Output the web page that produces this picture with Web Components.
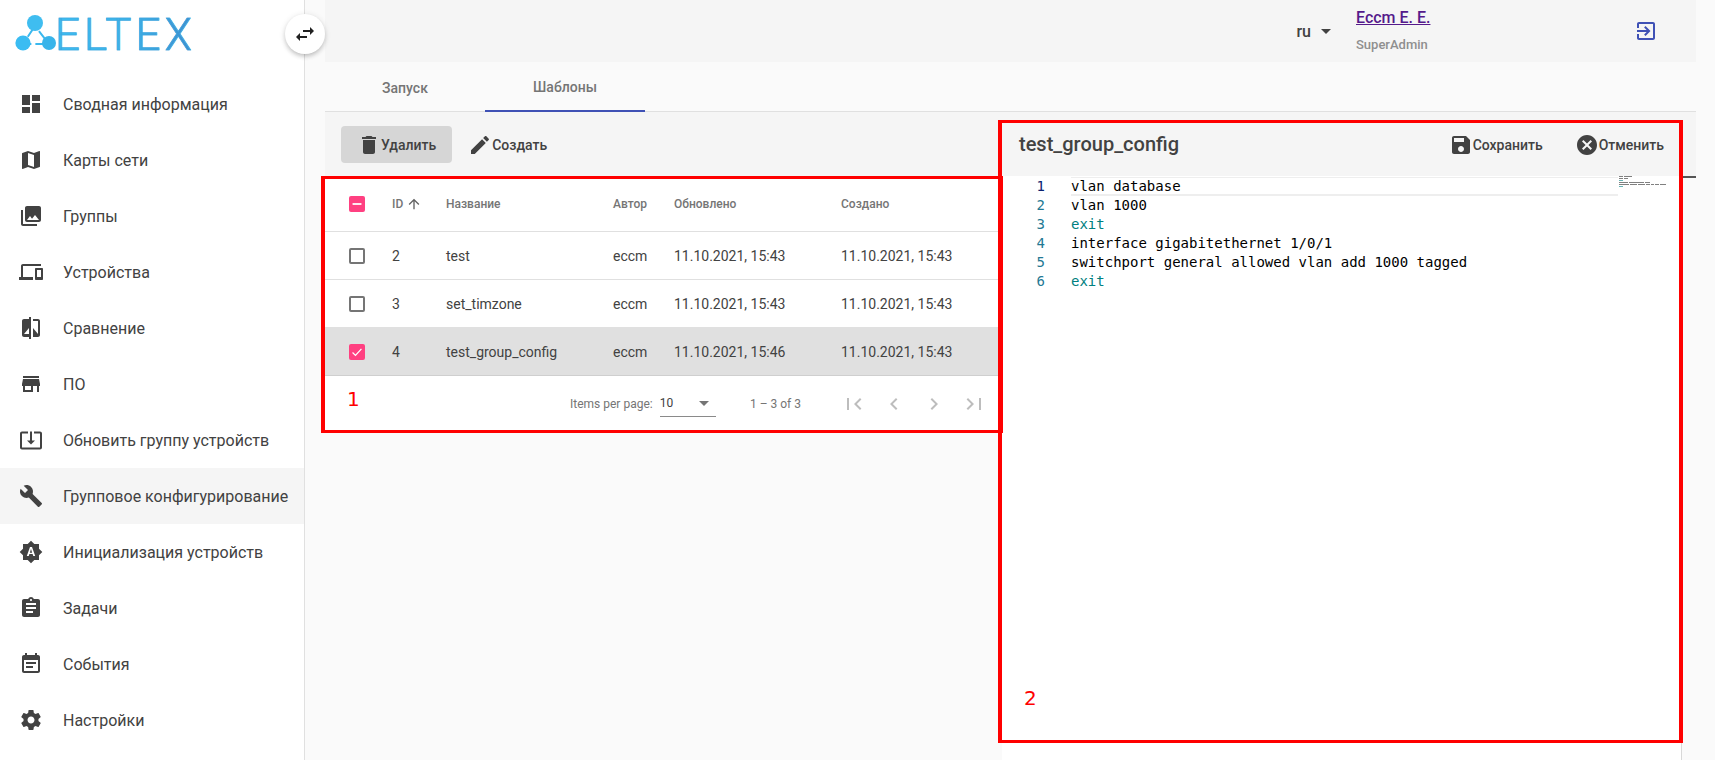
<!DOCTYPE html>
<html lang="ru">
<head>
<meta charset="utf-8">
<title>ELTEX</title>
<style>
  html, body { margin: 0; height: 100%; overflow: hidden; background: #fafafa; font-family: Roboto, "Liberation Sans", sans-serif; }
</style>
</head>
<body>
<eltex-app></eltex-app>
<script>
// material icon paths, viewBox 24x24
const ICONS = {
  dashboard: "M3 13h8V3H3v10zm0 8h8v-6H3v6zm10 0h8V11h-8v10zm0-18v6h8V3h-8z",
  map: "M20.5 3l-.16.03L15 5.1 9 3 3.36 4.9c-.21.07-.36.25-.36.48V20.5c0 .28.22.5.5.5l.16-.03L9 18.9l6 2.1 5.64-1.9c.21-.07.36-.25.36-.48V3.5c0-.28-.22-.5-.5-.5zM15 19l-6-2.11V5l6 2.11V19z",
  photos: "M22 16V4c0-1.1-.9-2-2-2H8c-1.1 0-2 .9-2 2v12c0 1.1.9 2 2 2h12c1.1 0 2-.9 2-2zm-11-4l2.03 2.71L16 11l4 5H8l3-4zM2 6v14c0 1.1.9 2 2 2h14v-2H4V6H2z",
  devices: "M4 6h18V4H4c-1.1 0-2 .9-2 2v11H0v3h14v-3H4V6zm19 2h-6c-.55 0-1 .45-1 1v10c0 .55.45 1 1 1h6c.55 0 1-.45 1-1V9c0-.55-.45-1-1-1zm-1 9h-4v-7h4v7z",
  compare: "M10 3H5c-1.1 0-2 .9-2 2v14c0 1.1.9 2 2 2h5v2h2V1h-2v2zm0 15H5l5-6v6zm9-15h-5v2h5v13l-5-6v9h5c1.1 0 2-.9 2-2V5c0-1.1-.9-2-2-2z",
  store: "M20 4H4v2h16V4zm1 10v-2l-1-5H4l-1 5v2h1v6h10v-6h4v6h2v-6h1zm-9 4H6v-4h6v4z",
  update: "M12 16.5l4-4h-3v-9h-2v9H8l4 4zm9-13h-6v1.99h6v14.03H3V5.49h6V3.5H3c-1.1 0-2 .9-2 2v14c0 1.1.9 2 2 2h18c1.1 0 2-.9 2-2v-14c0-1.1-.9-2-2-2z",
  build: "M22.7 19l-9.1-9.1c.9-2.3.4-5-1.5-6.9-2-2-5-2.4-7.4-1.3L9 6 6 9 1.6 4.7C.4 7.1.9 10.1 2.9 12.1c1.9 1.9 4.6 2.4 6.9 1.5l9.1 9.1c.4.4 1 .4 1.4 0l2.3-2.3c.5-.4.5-1.1.1-1.4z",
  auto: "M10.85 12.65h2.3L12 9l-1.15 3.65zM20 8.69V4h-4.69L12 .69 8.69 4H4v4.69L.69 12 4 15.31V20h4.69L12 23.31 15.31 20H20v-4.69L23.31 12 20 8.69zM14.3 16l-.7-2h-3.2l-.7 2H7.8L11 7h2l3.2 9h-1.9z",
  assignment: "M19 3h-4.18C14.4 1.84 13.3 1 12 1c-1.3 0-2.4.84-2.82 2H5c-1.1 0-2 .9-2 2v14c0 1.1.9 2 2 2h14c1.1 0 2-.9 2-2V5c0-1.1-.9-2-2-2zm-7 0c.55 0 1 .45 1 1s-.45 1-1 1-1-.45-1-1 .45-1 1-1zm2 14H7v-2h7v2zm3-4H7v-2h10v2zm0-4H7V7h10v2z",
  event: "M17 10H7v2h10v-2zm2-7h-1V1h-2v2H8V1H6v2H5c-1.11 0-1.99.9-1.99 2L3 19c0 1.1.89 2 2 2h14c1.1 0 2-.9 2-2V5c0-1.1-.9-2-2-2zm0 16H5V8h14v11zm-5-5H7v2h7v-2z",
  settings: "M19.43 12.98c.04-.32.07-.64.07-.98s-.03-.66-.07-.98l2.11-1.65c.19-.15.24-.42.12-.64l-2-3.46c-.12-.22-.39-.3-.61-.22l-2.49 1c-.52-.4-1.08-.73-1.69-.98l-.38-2.65C14.46 2.18 14.25 2 14 2h-4c-.25 0-.46.18-.49.42l-.38 2.65c-.61.25-1.17.59-1.69.98l-2.49-1c-.23-.09-.49 0-.61.22l-2 3.46c-.13.22-.07.49.12.64l2.11 1.65c-.04.32-.07.65-.07.98s.03.66.07.98l-2.11 1.65c-.19.15-.24.42-.12.64l2 3.46c.12.22.39.3.61.22l2.49-1c.52.4 1.08.73 1.69.98l.38 2.65c.03.24.24.42.49.42h4c.25 0 .46-.18.49-.42l.38-2.65c.61-.25 1.17-.59 1.69-.98l2.49 1c.23.09.49 0 .61-.22l2-3.46c.12-.22.07-.49-.12-.64l-2.11-1.65zM12 15.5c-1.93 0-3.5-1.57-3.5-3.5s1.57-3.5 3.5-3.5 3.5 1.57 3.5 3.5-1.57 3.5-3.5 3.5z",
  swap: "M6.99 11L3 15l3.99 4v-3H14v-2H6.99v-3zM21 9l-4-4v3h-7v2h7v3l4-4z",
  trash: "M6 19c0 1.1.9 2 2 2h8c1.1 0 2-.9 2-2V7H6v12zM19 4h-3.5l-1-1h-5l-1 1H5v2h14V4z",
  edit: "M3 17.25V21h3.75L17.81 9.94l-3.75-3.75L3 17.25zM20.71 7.04c.39-.39.39-1.02 0-1.41l-2.34-2.34c-.39-.39-1.02-.39-1.41 0l-1.83 1.83 3.75 3.75 1.83-1.83z",
  save: "M17 3H5c-1.11 0-2 .9-2 2v14c0 1.1.89 2 2 2h14c1.1 0 2-.9 2-2V7l-4-4zm-5 16c-1.66 0-3-1.34-3-3s1.34-3 3-3 3 1.34 3 3-1.34 3-3 3zm3-10H5V5h10v4z",
  cancel: "M12 2C6.47 2 2 6.47 2 12s4.47 10 10 10 10-4.47 10-10S17.53 2 12 2zm5 13.59L15.59 17 12 13.41 8.41 17 7 15.59 10.59 12 7 8.41 8.41 7 12 10.59 15.59 7 17 8.41 13.41 12 17 15.59z",
  logout: "M10.09 15.59L11.5 17l5-5-5-5-1.41 1.41L12.67 11H3v2h9.67l-2.58 2.59zM19 3H5c-1.11 0-2 .9-2 2v4h2V5h14v14H5v-4H3v4c0 1.1.89 2 2 2h14c1.1 0 2-.9 2-2V5c0-1.1-.9-2-2-2z",
  up: "M4 12l1.41 1.41L11 7.83V20h2V7.83l5.58 5.59L20 12l-8-8-8 8z",
  // paginator icons have a wider gap between bar and chevron
  first: "M19.41 7.41L18 6l-6 6 6 6 1.41-1.41L14.83 12zM5 6h2v12H5z",
  prev: "M15.41 7.41L14 6l-6 6 6 6 1.41-1.41L10.83 12z",
  next: "M10 6L8.59 7.41 13.17 12l-4.58 4.59L10 18l6-6z",
  last: "M4.59 7.41L9.17 12l-4.58 4.59L6 18l6-6-6-6zM17 6h2v12h-2z",
  drop: "M7 10l5 5 5-5z"
};

class MatIcon extends HTMLElement {
  connectedCallback() {
    const size = this.getAttribute("size") || 24;
    this.attachShadow({ mode: "open" }).innerHTML = `
      <style>
        :host { display: inline-flex; flex: none; width: ${size}px; height: ${size}px; }
        svg { width: 100%; height: 100%; fill: currentColor; display: block; }
      </style>
      <svg viewBox="0 0 24 24"><path d="${ICONS[this.getAttribute("name")]}"/></svg>`;
  }
}

class EltexLogo extends HTMLElement {
  constructor() {
    super();
    this.attachShadow({ mode: "open" }).innerHTML = `
      <style>
        :host { display: flex; align-items: center; height: 76px; padding-left: 15px; box-sizing: border-box; }
        svg { width: 42px; height: 40px; flex: none; margin-top: -8px; }
        span {
          font: 300 44px/44px Roboto, sans-serif;
          letter-spacing: 4px;
          margin: -7px 0 0 -2px;
          background: linear-gradient(90deg, #3cbcf0 0%, #3cb0e6 55%, #3d8ccc 100%);
          -webkit-background-clip: text;
          background-clip: text;
          color: transparent;
          -webkit-text-stroke: .6px #3ca6e0;
        }
      </style>
      <svg viewBox="0 0 42 40">
        <g stroke="#3ab8ee" stroke-width="2" fill="none"><path d="M20 12 8 30h26z" stroke-dasharray="13 4"/></g>
        <circle cx="20" cy="9" r="8" fill="#3fbdf0"/>
        <circle cx="8" cy="29" r="7.6" fill="#3abcf2"/>
        <circle cx="34" cy="29" r="7" fill="#38b4ea"/>
      </svg>
      <span>ELTEX</span>`;
  }
}

class NavItem extends HTMLElement {
  connectedCallback() {
    const active = this.hasAttribute("active");
    this.attachShadow({ mode: "open" }).innerHTML = `
      <style>
        :host { display: flex; align-items: center; height: 56px; padding-left: 19px; gap: 20px; color: #424242;
                font-size: 16px; background: ${active ? "#f5f5f5" : "transparent"}; white-space: nowrap; }
      </style>
      <mat-icon name="${this.getAttribute("icon")}"></mat-icon>
      <slot></slot>`;
  }
}

class SideNav extends HTMLElement {
  constructor() {
    super();
    this.attachShadow({ mode: "open" }).innerHTML = `
      <style>
        :host { display: block; position: relative; flex: none; width: 304px; height: 760px; background: #fff; border-right: 1px solid #e0e0e0; }
        .toggle { position: absolute; left: 285px; top: 14px; width: 40px; height: 40px; border-radius: 50%; background: #fff;
                  box-shadow: 0 3px 5px -1px rgba(0,0,0,.2), 0 1px 6px rgba(0,0,0,.12); display: flex; align-items: center; justify-content: center; color: #212121; z-index: 2; }
      </style>
      <eltex-logo></eltex-logo>
      <div class="toggle"><mat-icon name="swap"></mat-icon></div>
      <nav-item icon="dashboard">Сводная информация</nav-item>
      <nav-item icon="map">Карты сети</nav-item>
      <nav-item icon="photos">Группы</nav-item>
      <nav-item icon="devices">Устройства</nav-item>
      <nav-item icon="compare">Сравнение</nav-item>
      <nav-item icon="store">ПО</nav-item>
      <nav-item icon="update">Обновить группу устройств</nav-item>
      <nav-item icon="build" active>Групповое конфигурирование</nav-item>
      <nav-item icon="auto">Инициализация устройств</nav-item>
      <nav-item icon="assignment">Задачи</nav-item>
      <nav-item icon="event">События</nav-item>
      <nav-item icon="settings">Настройки</nav-item>`;
  }
}

class TopBar extends HTMLElement {
  constructor() {
    super();
    this.attachShadow({ mode: "open" }).innerHTML = `
      <style>
        :host { display: flex; align-items: center; justify-content: flex-end; height: 62px; background: #f5f5f5; color: #424242; padding-right: 38px; }
        .lang { display: flex; align-items: center; font-size: 16px; font-weight: 500; margin-right: 18px; }
        .lang mat-icon { margin-left: 3px; }
        .user { width: 278px; align-self: stretch; display: flex; flex-direction: column; }
        a { font-size: 16px; font-weight: 500; color: #551a8b; text-decoration: underline; line-height: 18px; margin-top: 9px; align-self: flex-start; }
        small { font-size: 13px; font-weight: 500; color: #8f8f8f; line-height: 16px; margin-top: 10px; }
      </style>
      <div class="lang">ru<mat-icon name="drop"></mat-icon></div>
      <div class="user"><a href="#">Eccm E. E.</a><small>SuperAdmin</small></div>
      <mat-icon name="logout" style="color:#3f51b5"></mat-icon>`;
  }
}

class TabBar extends HTMLElement {
  constructor() {
    super();
    this.attachShadow({ mode: "open" }).innerHTML = `
      <style>
        :host { display: flex; height: 49px; border-bottom: 1px solid #e0e0e0; color: #757575; font-size: 14px; font-weight: 500; }
        div { width: 160px; display: flex; align-items: center; justify-content: center; box-sizing: border-box; padding-top: 3px; }
        .on { border-bottom: 2px solid #3f51b5; height: 49.5px; }
      </style>
      <div>Запуск</div><div class="on">Шаблоны</div>`;
  }
}

class ToolButton extends HTMLElement {
  connectedCallback() {
    const raised = this.hasAttribute("raised");
    this.attachShadow({ mode: "open" }).innerHTML = `
      <style>
        :host { display: inline-flex; align-items: center; height: 37px; box-sizing: border-box; padding: 2px 16px 0; border-radius: 4px;
                color: #424242; font-size: 14px; font-weight: 500; white-space: nowrap; background: ${raised ? "#d6d6d6" : "transparent"}; }
      </style>
      <mat-icon name="${this.getAttribute("icon")}"></mat-icon><slot></slot>`;
  }
}

class CheckBox extends HTMLElement {
  connectedCallback() {
    const state = this.getAttribute("state");
    const mark = state === "checked" ? `<svg viewBox="0 0 18 18"><path d="M4 9.5l3.3 3.3L14 5.5" fill="none" stroke="#fff" stroke-width="1.4"/></svg>`
      : state === "mixed" ? `<svg viewBox="0 0 18 18"><path d="M4 9h10" stroke="#fff" stroke-width="2"/></svg>` : "";
    this.attachShadow({ mode: "open" }).innerHTML = `
      <style>
        :host { display: block; border-radius: 2px; flex: none;
                ${state ? "background:#ff4081;width:16px;height:16px;" : "border:2px solid #757575;width:12px;height:12px;"} }
        svg { display: block; width: 16px; height: 16px; }
      </style>${mark}`;
  }
}

const COLS = "67px 54px 167px 61px 167px 160px";

class TableRow extends HTMLElement {
  connectedCallback() {
    const selected = this.hasAttribute("selected");
    const head = this.hasAttribute("head");
    this.attachShadow({ mode: "open" }).innerHTML = `
      <style>
        :host { display: grid; grid-template-columns: ${COLS}; align-items: center; box-sizing: border-box;
                height: ${head ? 56 : 48}px; border-bottom: 1px solid ${selected ? "#cfcfcf" : "#e0e0e0"};
                background: ${selected ? "#e0e0e0" : "transparent"};
                color: ${head ? "#757575" : "#424242"}; font-size: ${head ? 12 : 14}px; font-weight: ${head ? 500 : 400}; white-space: nowrap; }
        ::slotted(:first-child) { margin-left: 24px; }
      </style>
      <slot></slot>`;
  }
}

class TablePaginator extends HTMLElement {
  constructor() {
    super();
    this.attachShadow({ mode: "open" }).innerHTML = `
      <style>
        :host { display: flex; align-items: center; height: 56px; padding-left: 245px; color: #757575; font-size: 12px; white-space: nowrap; }
        .size { display: flex; align-items: center; justify-content: space-between; box-sizing: border-box; width: 59px; height: 25px; margin-left: 7px; border-bottom: 1px solid #8a8a8a; color: #424242; padding-bottom: 2px; }
        .range { margin-left: 34px; margin-right: 41px; }
        mat-icon { color: #bdbdbd; margin-right: 16px; }
        .size mat-icon { color: #757575; margin-right: 0; }
      </style>
      <span>Items per page:</span>
      <div class="size"><span>10</span><mat-icon name="drop"></mat-icon></div>
      <span class="range">1 – 3 of 3</span>
      <mat-icon name="first"></mat-icon><mat-icon name="prev"></mat-icon><mat-icon name="next"></mat-icon><mat-icon name="last"></mat-icon>`;
  }
}

class TemplateList extends HTMLElement {
  constructor() {
    super();
    this.attachShadow({ mode: "open" }).innerHTML = `
      <style>
        :host { display: block; flex: none; width: 677px; }
        .tools { display: flex; align-items: center; height: 64px; background: #f5f5f5; padding-left: 16px; }
        .table { background: #fff; }
        .sort { display: flex; align-items: center; gap: 3px; }
        .sort mat-icon { color: #616161; }
      </style>
      <div class="tools">
        <tool-button icon="trash" raised>Удалить</tool-button>
        <tool-button icon="edit">Создать</tool-button>
      </div>
      <div class="table">
        <table-row head><check-box state="mixed"></check-box><span class="sort">ID <mat-icon name="up" size="16"></mat-icon></span><span>Название</span><span>Автор</span><span>Обновлено</span><span>Создано</span></table-row>
        <table-row><check-box></check-box><span>2</span><span>test</span><span>eccm</span><span>11.10.2021, 15:43</span><span>11.10.2021, 15:43</span></table-row>
        <table-row><check-box></check-box><span>3</span><span>set_timzone</span><span>eccm</span><span>11.10.2021, 15:43</span><span>11.10.2021, 15:43</span></table-row>
        <table-row selected><check-box state="checked"></check-box><span>4</span><span>test_group_config</span><span>eccm</span><span>11.10.2021, 15:46</span><span>11.10.2021, 15:43</span></table-row>
        <table-paginator></table-paginator>
      </div>`;
  }
}

class CodeEditor extends HTMLElement {
  constructor() {
    super();
    const lines = [
      ["vlan database"], ["vlan 1000"], ["exit", "kw"],
      ["interface gigabitethernet 1/0/1"],
      ["switchport general allowed vlan add 1000 tagged"], ["exit", "kw"]
    ];
    const rows = lines.map(([text, cls], i) => `
      <div class="num${i === 0 ? " cur" : ""}">${i + 1}</div>
      <div class="code ${cls || ""}${i === 0 ? " cur" : ""}">${text}</div>`).join("");
    // minimap: every word is a thin bar, one char is one pixel
    const bars = lines.map(([text, cls], i) => {
      let x = 1;
      return text.split(" ").map((word) => {
        const bar = `<rect x="${x}" y="${i * 2}" width="${word.length}" height="1" fill="${cls ? "#66b5b5" : "#808080"}"/>`;
        x += word.length + 1;
        return bar;
      }).join("");
    }).join("");
    this.attachShadow({ mode: "open" }).innerHTML = `
      <style>
        :host { display: block; position: relative; flex: 1; background: #fff; font: 14px/19px "DejaVu Sans Mono", monospace; color: #000; }
        .lines { display: grid; grid-template-columns: 69px 547px; padding-top: 1px; }
        .num { text-align: right; padding-right: 26px; color: #237893; white-space: pre; }
        .num.cur { color: #0b216f; }
        .code { white-space: pre; box-sizing: border-box; height: 19px; }
        .code.cur { box-shadow: inset 0 -2px 0 #eee, inset 0 1px 0 #eee; }
        .kw { color: #008080; }
        svg { position: absolute; left: 616px; top: 0; width: 48px; height: 14px; }
      </style>
      <div class="lines">${rows}</div>
      <svg viewBox="0 0 48 14">${bars}</svg>`;
  }
}

class ConfigPanel extends HTMLElement {
  constructor() {
    super();
    this.attachShadow({ mode: "open" }).innerHTML = `
      <style>
        :host { display: block; flex: 1; position: relative; min-width: 0; }
        .head { display: flex; align-items: center; height: 64px; background: #f5f5f5; padding: 0 32px 0 17px; color: #424242; }
        h2 { flex: 1; margin: 0; font-size: 20px; font-weight: 500; color: #424242; }
        tool-button { padding: 2px 0 0; }
        .save { margin-right: 32px; }
        .body { width: 680px; height: 584px; display: flex; border-right: 1px solid #d8d8d8; box-sizing: border-box; }
        .rule { position: absolute; right: 0; top: 64px; width: 14px; height: 2px; background: #555; }
      </style>
      <div class="head">
        <h2>test_group_config</h2>
        <tool-button class="save" icon="save">Сохранить</tool-button>
        <tool-button icon="cancel">Отменить</tool-button>
      </div>
      <div class="rule"></div>
      <div class="body"><code-editor></code-editor></div>`;
  }
}

class NoteBox extends HTMLElement {
  // red annotation drawn over the screenshot
  connectedCallback() {
    const a = (n) => this.getAttribute(n);
    this.attachShadow({ mode: "open" }).innerHTML = `
      <style>
        :host { position: absolute; left: ${a("x")}px; top: ${a("y")}px; width: ${a("w")}px; height: ${a("h")}px; box-sizing: border-box; border: 3px solid #ff0000; border-width: 3px 4px; pointer-events: none; z-index: 5; }
        span { position: absolute; left: ${a("nx")}px; top: ${a("ny")}px; font: 20px/24px "DejaVu Sans", sans-serif; color: #ff0000; }
      </style>
      <span>${a("n")}</span>`;
  }
}

class EltexApp extends HTMLElement {
  constructor() {
    super();
    this.attachShadow({ mode: "open" }).innerHTML = `
      <style>
        :host { display: flex; position: relative; width: 1715px; height: 760px; overflow: hidden; background: #fafafa; font-family: Roboto, "Liberation Sans", sans-serif; }
        main { flex: 1; min-width: 0; padding: 0 19px 0 20px; }
        .split { display: flex; height: 648px; }
      </style>
      <side-nav></side-nav>
      <main>
        <top-bar></top-bar>
        <tab-bar></tab-bar>
        <div class="split">
          <template-list></template-list>
          <config-panel></config-panel>
        </div>
      </main>
      <note-box x="321" y="176" w="682" h="257" n="1" nx="22" ny="208"></note-box>
      <note-box x="998" y="120" w="685" h="623" n="2" nx="22" ny="563"></note-box>`;
  }
}

customElements.define("mat-icon", MatIcon);
customElements.define("eltex-logo", EltexLogo);
customElements.define("nav-item", NavItem);
customElements.define("side-nav", SideNav);
customElements.define("top-bar", TopBar);
customElements.define("tab-bar", TabBar);
customElements.define("tool-button", ToolButton);
customElements.define("check-box", CheckBox);
customElements.define("table-row", TableRow);
customElements.define("table-paginator", TablePaginator);
customElements.define("template-list", TemplateList);
customElements.define("code-editor", CodeEditor);
customElements.define("config-panel", ConfigPanel);
customElements.define("note-box", NoteBox);
customElements.define("eltex-app", EltexApp);
</script>
</body>
</html>
